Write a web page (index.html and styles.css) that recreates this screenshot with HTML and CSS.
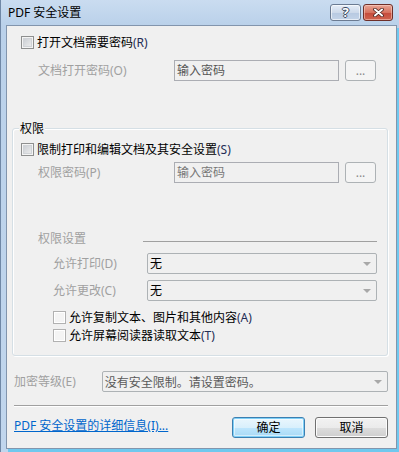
FILE: index.html
```html
<!DOCTYPE html>
<html lang="zh-CN">
<head>
    <meta charset="UTF-8">
    <title>PDF 安全设置</title>
    <link rel="stylesheet" href="styles.css">
</head>
<body>

<div class="window">
    <!-- Title bar -->
    <div class="titlebar">
        <span class="title">PDF 安全设置</span>
        <div class="caption-buttons">
            <div class="cap-btn help">?</div>
            <div class="cap-btn close">
                <svg width="11" height="9" viewBox="0 0 11 9">
                    <path d="M2 1.5 L9 7.5 M9 1.5 L2 7.5" stroke="#4a2420" stroke-width="3.6" stroke-linecap="round"/>
                    <path d="M2 1.5 L9 7.5 M9 1.5 L2 7.5" stroke="#fff" stroke-width="2" stroke-linecap="round"/>
                </svg>
            </div>
        </div>
    </div>

    <div class="client">
        <!-- Open password -->
        <div class="check-row">
            <span class="checkbox"></span>
            <span>打开文档需要密码<span class="key">(R)</span></span>
        </div>
        <div class="field-row">
            <span class="field-label">文档打开密码(O)</span>
            <div class="textbox">输入密码</div>
            <div class="dots-btn">...</div>
        </div>

        <!-- Permissions -->
        <div class="group">
            <div class="group-title">权限</div>
            <div class="check-row in-group">
                <span class="checkbox"></span>
                <span>限制打印和编辑文档及其安全设置<span class="key">(S)</span></span>
            </div>
            <div class="field-row in-group">
                <span class="field-label">权限密码(P)</span>
                <div class="textbox light">输入密码</div>
                <div class="dots-btn">...</div>
            </div>

            <div class="section-head">
                <span class="section-label">权限设置</span>
                <span class="section-line"></span>
            </div>

            <div class="combo-row first">
                <span class="combo-label">允许打印(D)</span>
                <div class="combo"><span>无</span><span class="arrow"></span></div>
            </div>
            <div class="combo-row">
                <span class="combo-label">允许更改(C)</span>
                <div class="combo"><span>无</span><span class="arrow"></span></div>
            </div>

            <div class="check-row sub first">
                <span class="checkbox off"></span>
                <span>允许复制文本、图片和其他内容<span class="key">(A)</span></span>
            </div>
            <div class="check-row sub">
                <span class="checkbox off"></span>
                <span>允许屏幕阅读器读取文本<span class="key">(T)</span></span>
            </div>
        </div>

        <!-- Encryption level -->
        <div class="enc-row">
            <span class="enc-label">加密等级(E)</span>
            <div class="combo wide"><span class="enc-value">没有安全限制<span class="punc">。</span>请设置密码<span class="punc">。</span></span><span class="arrow"></span></div>
        </div>

        <div class="separator"></div>

        <div class="button-row">
            <a class="link" href="#">PDF 安全设置的详细信息(I)...</a>
            <div class="btn default">确定</div>
            <div class="btn">取消</div>
        </div>
    </div>
</div>

</body>
</html>
```

FILE: styles.css
```css
body {
    margin: 0;
    font-family: "Noto Sans", "Noto Sans CJK SC", sans-serif;
    font-size: 12px;
    line-height: 13px;
    color: #000;
}

.window {
    width: 399px;
    height: 452px;
    box-sizing: border-box;
    border-left: 1px solid #7088a6;
    background: linear-gradient(#cadcf0, #bad1ea 25px, #c1d6ed);
    display: flex;
    flex-direction: column;
}

/* Title bar */
.titlebar {
    height: 25px;
    flex: none;
    display: flex;
    align-items: flex-start;
    padding: 0 6px 0 7px;
}

.title {
    margin-top: 6px;
}

.caption-buttons {
    margin-left: auto;
    margin-top: 4px;
    display: flex;
    gap: 2px;
}

.cap-btn {
    height: 17px;
    box-sizing: border-box;
    border-radius: 3px;
    display: flex;
    align-items: center;
    justify-content: center;
}

.cap-btn.help {
    width: 31px;
    border: 1px solid #6b7b92;
    background: linear-gradient(#e6eef8, #cdd9ea 50%, #b7c9e1 51%, #c3d3e8);
    box-shadow: inset 0 0 0 1px rgba(255, 255, 255, 0.6);
    font-weight: bold;
    font-size: 13px;
    color: #fff;
    text-shadow: 1px 0 #3a4a62, -1px 0 #3a4a62, 0 1px #3a4a62, 0 -1px #3a4a62;
}

.cap-btn.close {
    width: 30px;
    border: 1px solid #6e2f29;
    background: linear-gradient(#e9a595, #d7725f 50%, #c54a3b 51%, #d0644f);
    box-shadow: inset 0 0 0 1px rgba(255, 220, 210, 0.5);
}

/* Client area */
.client {
    flex: 1;
    margin: 0 2px 3px 5px;
    border: 1px solid #8295ad;
    background: #f0f0f0;
    box-shadow: 2px 3px 0 #70c8ee;
    padding: 10px 8px 0 0;
}

.check-row {
    display: flex;
    align-items: center;
    gap: 3px;
    height: 13px;
    margin-left: 14px;
}

.checkbox {
    width: 13px;
    height: 13px;
    box-sizing: border-box;
    border: 1px solid #8e8f8f;
    background: linear-gradient(135deg, #c4c8ce, #f2f2f2);
    box-shadow: inset 0 0 0 1px #f4f4f4, inset 0 0 0 2px #d0d3d7;
}

.checkbox.off {
    border-color: #b1b1b1;
    background: #f4f4f4;
    box-shadow: inset 0 0 0 1px #fff;
}

.key {
    color: #1f2d55;
}

.field-row {
    display: flex;
    height: 21px;
    margin-top: 11px;
    padding-left: 31px;
}

.field-label {
    width: 136px;
    line-height: 21px;
    color: #a0a0a0;
}

.textbox {
    width: 165px;
    box-sizing: border-box;
    border: 1px solid #abadb3;
    line-height: 19px;
    padding-left: 2px;
    color: #555;
}

.textbox.light {
    color: #777;
}

.dots-btn {
    width: 31px;
    margin-left: 6px;
    box-sizing: border-box;
    border: 1px solid #adb2b5;
    border-radius: 3px;
    background: #f4f4f4;
    line-height: 19px;
    text-align: center;
    color: #8a8a8a;
}

/* Permissions group */
.group {
    margin: 47px 0 0 5px;
    width: 376px;
    height: 228px;
    box-sizing: border-box;
    border: 1px solid #d5dfe5;
    border-radius: 3px;
    box-shadow: inset 1px 1px #fff, 1px 1px #fff;
    padding-left: 8px;
}

.group-title {
    width: fit-content;
    margin: -7px 0 0 -2px;
    padding: 0 1px;
    background: #f0f0f0;
}

.check-row.in-group {
    margin: 8px 0 0 0;
}

.field-row.in-group {
    margin-top: 6px;
    padding-left: 17px;
}

.section-head {
    display: flex;
    margin-top: 49px;
    padding-left: 17px;
}

.section-label {
    width: 105px;
    color: #a0a0a0;
}

.section-line {
    width: 234px;
    margin-top: 9px;
    height: 0;
    border-top: 1px solid #a0a0a0;
}

.combo-row {
    display: flex;
    height: 21px;
    margin-top: 6px;
    padding-left: 32px;
}

.combo-row.first {
    margin-top: 8px;
}

.combo-label {
    width: 94px;
    line-height: 21px;
    color: #a0a0a0;
}

.combo {
    width: 230px;
    box-sizing: border-box;
    border: 1px solid #adb2b5;
    border-radius: 2px;
    display: flex;
    align-items: center;
    padding-left: 2px;
    line-height: 19px;
}

.arrow {
    margin-left: auto;
    margin-right: 5px;
    width: 0;
    height: 0;
    border-left: 4px solid transparent;
    border-right: 4px solid transparent;
    border-top: 4px solid #a8a8a8;
}

.check-row.sub {
    margin: 5px 0 0 32px;
}

.check-row.sub.first {
    margin-top: 10px;
}

/* Encryption level */
.enc-row {
    display: flex;
    height: 21px;
    margin-top: 15px;
    padding-left: 7px;
}

.enc-label {
    width: 88px;
    line-height: 21px;
    color: #a0a0a0;
}

.combo.wide {
    width: 287px;
}

.enc-value {
    color: #5a5a5a;
}

.punc {
    font-family: "Noto Sans CJK TC", sans-serif;
}

.separator {
    margin: 13px 0 0 7px;
    width: 374px;
    border-top: 1px solid #a0a0a0;
    border-bottom: 1px solid #fff;
}

/* Bottom buttons */
.button-row {
    display: flex;
    align-items: flex-start;
    margin-top: 10px;
    padding-left: 7px;
}

.link {
    margin-top: 2px;
    color: #0066cc;
    text-decoration: underline;
}

.btn {
    width: 73px;
    height: 21px;
    box-sizing: border-box;
    border: 1px solid #707070;
    border-radius: 3px;
    background: linear-gradient(#f2f2f2, #ebebeb 50%, #dddddd 51%, #cfcfcf);
    box-shadow: inset 0 0 0 1px #fcfcfc;
    line-height: 19px;
    text-align: center;
    margin-left: 10px;
}

.btn.default {
    margin-left: auto;
    border-color: #3c7fb1;
    background: linear-gradient(#eaf6fd, #d9f0fc 50%, #bee6fd 51%, #a7d9f5);
    box-shadow: inset 0 0 0 1px #7fd0f7, inset 0 0 0 2px rgba(255, 255, 255, 0.5);
}
```
